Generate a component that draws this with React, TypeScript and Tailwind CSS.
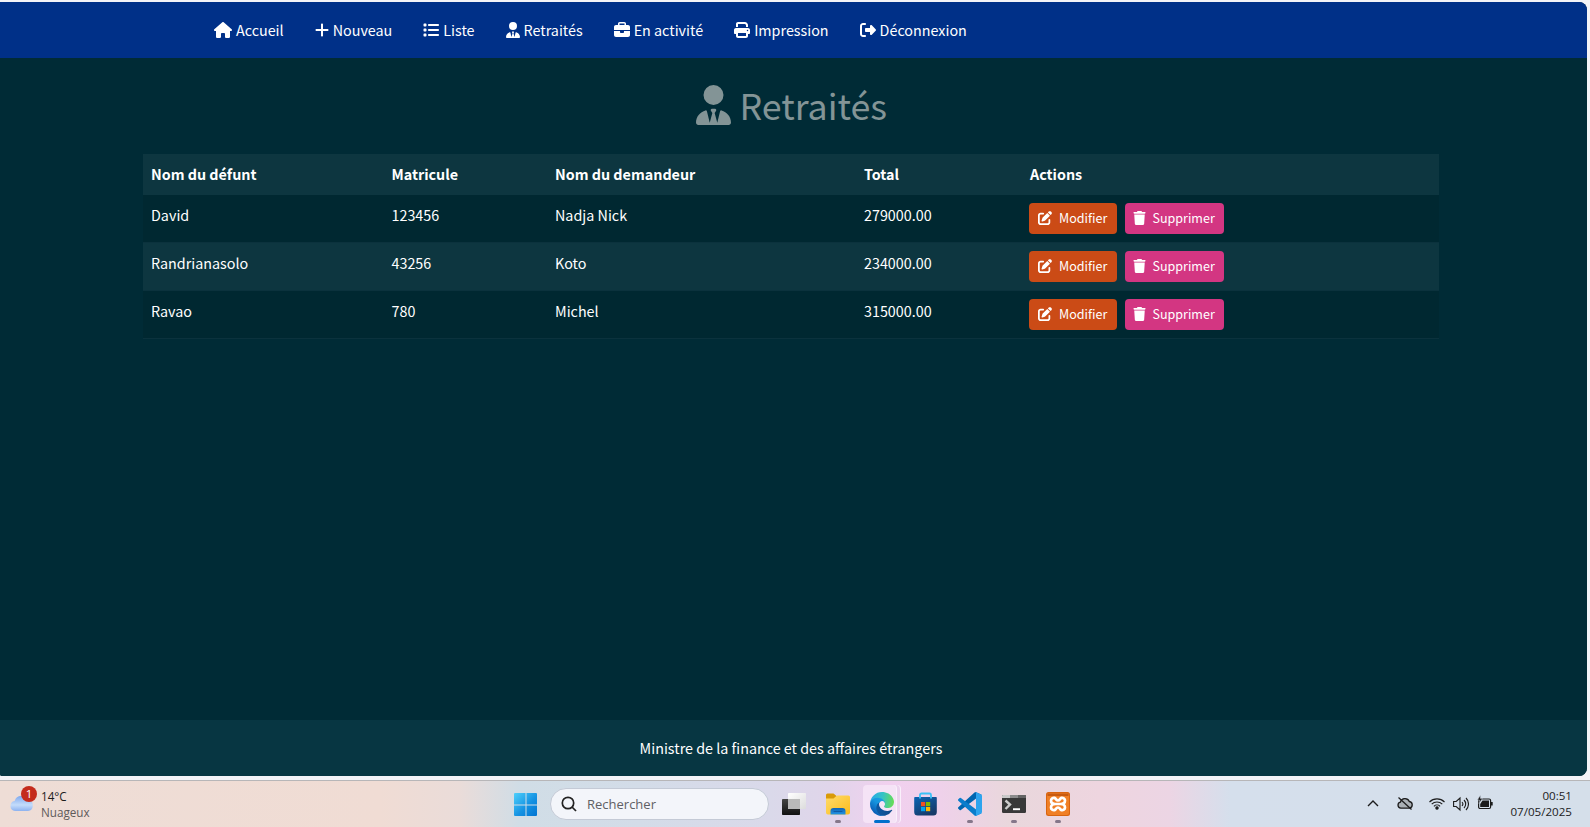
import type { ReactNode } from "react";
import {
  FaHouse,
  FaPlus,
  FaList,
  FaUserTie,
  FaBriefcase,
  FaPrint,
  FaRightFromBracket,
  FaPenToSquare,
  FaTrash,
} from "react-icons/fa6";

const navItems = [
  { label: "Accueil", icon: <FaHouse className="h-4 w-[18px]" /> },
  { label: "Nouveau", icon: <FaPlus className="h-4 w-[14px]" /> },
  { label: "Liste", icon: <FaList className="size-4" /> },
  { label: "Retraités", icon: <FaUserTie className="h-4 w-[14px]" /> },
  { label: "En activité", icon: <FaBriefcase className="size-4" /> },
  { label: "Impression", icon: <FaPrint className="size-4" /> },
  { label: "Déconnexion", icon: <FaRightFromBracket className="size-4" /> },
];

const rows = [
  { defunt: "David", matricule: "123456", demandeur: "Nadja Nick", total: "279000.00" },
  { defunt: "Randrianasolo", matricule: "43256", demandeur: "Koto", total: "234000.00" },
  { defunt: "Ravao", matricule: "780", demandeur: "Michel", total: "315000.00" },
];

function Navbar() {
  return (
    <nav className="flex h-14 shrink-0 items-center gap-[31px] bg-[#003088] pl-[214px] text-white">
      {navItems.map((item) => (
        <a key={item.label} className="flex items-center gap-1 whitespace-nowrap">
          {item.icon}
          <span className="leading-6">{item.label}</span>
        </a>
      ))}
    </nav>
  );
}

function RecordsTable() {
  return (
    <table className="ml-[143px] mt-[21px] w-[1296px] table-fixed border-collapse text-left text-white">
      <colgroup>
        <col className="w-[240.5px]" />
        <col className="w-[163.5px]" />
        <col className="w-[309px]" />
        <col className="w-[165px]" />
        <col />
      </colgroup>
      <thead>
        <tr className="h-[41px] bg-[#0d3640] align-top font-bold">
          {["Nom du défunt", "Matricule", "Nom du demandeur", "Total", "Actions"].map((h) => (
            <th key={h} className="px-2 pt-2 leading-6 last:pl-[9px]">{h}</th>
          ))}
        </tr>
      </thead>
      <tbody>
        {rows.map((r) => (
          <tr
            key={r.matricule}
            className="h-12 bg-[#002831] align-top shadow-[inset_0_-1px_0_#0b323d] even:bg-[#0d3640]"
          >
            <td className="px-2 pt-2 leading-6">{r.defunt}</td>
            <td className="px-2 pt-2 leading-6">{r.matricule}</td>
            <td className="px-2 pt-2 leading-6">{r.demandeur}</td>
            <td className="px-2 pt-2 leading-6">{r.total}</td>
            <td className="px-2 pt-2">
              <div className="flex gap-2 text-[12.53px] leading-[21px]">
                <button className="flex h-[31px] w-[88px] items-center gap-[7px] rounded-[4px] bg-[#cb4b16] pl-[9px]">
                  <FaPenToSquare className="mb-[2px] size-[14px]" />
                  <span className="pb-[2px]">Modifier</span>
                </button>
                <button className="flex h-[31px] w-[99px] items-center gap-[6.5px] rounded-[4px] bg-[#d33682] pl-[8px]">
                  <FaTrash className="mb-[2px] h-[14px] w-[13px]" />
                  <span className="pb-[2px]">Supprimer</span>
                </button>
              </div>
            </td>
          </tr>
        ))}
      </tbody>
    </table>
  );
}

function WeatherIcon() {
  return (
    <svg width="28" height="28" viewBox="0 0 28 28">
      <defs>
        <linearGradient id="cloud" x1="0" y1="0" x2="0" y2="1">
          <stop offset="0" stopColor="#7ea8ee" />
          <stop offset="0.6" stopColor="#c4dcfa" />
          <stop offset="1" stopColor="#8db2f0" />
        </linearGradient>
      </defs>
      <path d="M6 25a5 5 0 0 1-.4-9.9A7.5 7.5 0 0 1 19.500 14a5.600 5.600 0 0 1-.5 11z" fill="url(#cloud)" />
      <circle cx="20" cy="8" r="8" fill="#c42b1c" />
      <text x="20" y="12" textAnchor="middle" fontSize="11.5" fill="#fff" fontFamily="Open Sans, sans-serif">1</text>
    </svg>
  );
}

function WindowsIcon() {
  return (
    <svg width="24" height="24" viewBox="0 0 24 24">
      <defs>
        <linearGradient id="win" gradientUnits="userSpaceOnUse" x1="0" y1="0" x2="24" y2="24">
          <stop offset="0" stopColor="#4fd0fb" />
          <stop offset="0.55" stopColor="#1391e2" />
          <stop offset="1" stopColor="#0072d0" />
        </linearGradient>
      </defs>
      <path fill="url(#win)" d="M1 0h10.500v11.500H0V1a1 1 0 0 1 1-1zM12.500 0H22a1 1 0 0 1 1 1v10.500H12.500zM0 12.500h11.500V23H1a1 1 0 0 1-1-1zM12.500 12.500H23V22a1 1 0 0 1-1 1h-9.500z" />
    </svg>
  );
}

function TaskViewIcon() {
  return (
    <svg width="24" height="24" viewBox="0 0 24 24">
      <defs>
        <linearGradient id="tv" x1="0" y1="0" x2="0" y2="1">
          <stop offset="0" stopColor="#444" />
          <stop offset="1" stopColor="#111" />
        </linearGradient>
        <linearGradient id="tvf" x1="0" y1="0" x2="1" y2="1">
          <stop offset="0" stopColor="#fff" />
          <stop offset="1" stopColor="#dcdcdc" />
        </linearGradient>
      </defs>
      <rect y="7" width="18" height="16" rx=".8" fill="url(#tv)" />
      <rect x="6" y="1" width="18" height="16" rx=".8" fill="url(#tvf)" />
      <path d="M6 7h12v10H6.800a.8.8 0 0 1-.8-.8z" fill="#b9b9b9" />
    </svg>
  );
}

function FolderIcon() {
  return (
    <svg width="24" height="24" viewBox="0 0 24 24">
      <defs>
        <linearGradient id="fold" x1="0" y1="0" x2="1" y2="1">
          <stop offset="0" stopColor="#ffdb6b" />
          <stop offset="1" stopColor="#fbbc1c" />
        </linearGradient>
        <linearGradient id="foldb" x1="0" y1="0" x2="0" y2="1">
          <stop offset="0" stopColor="#1164b4" />
          <stop offset="1" stopColor="#2294e4" />
        </linearGradient>
      </defs>
      <path d="M0 3a1.500 1.500 0 0 1 1.500-1.500h6L10.500 4H22v4H0z" fill="#d99a08" />
      <path d="M0 6.500h7.500L11 3.500h11.500A1.500 1.500 0 0 1 24 5v15.500a2 2 0 0 1-2 2H2a2 2 0 0 1-2-2z" fill="url(#fold)" />
      <path d="M4.500 22.500V19a3 3 0 0 1 3-3h9a3 3 0 0 1 3 3v3.500z" fill="url(#foldb)" />
      <path d="M8 19.500h8" stroke="#0f5ba6" strokeWidth="1" strokeLinecap="round" />
    </svg>
  );
}

function EdgeIcon() {
  return (
    <svg width="24" height="24" viewBox="0 0 256 256">
      <defs>
        <linearGradient id="ea" x1="60" y1="177" x2="240" y2="177" gradientUnits="userSpaceOnUse">
          <stop offset="0" stopColor="#0c59a4" />
          <stop offset="1" stopColor="#114a8b" />
        </linearGradient>
        <linearGradient id="eb" x1="150" y1="90" x2="40" y2="220" gradientUnits="userSpaceOnUse">
          <stop offset="0" stopColor="#1b9de2" />
          <stop offset="0.4" stopColor="#1595df" />
          <stop offset="1" stopColor="#0a5cb5" />
        </linearGradient>
        <linearGradient id="ec" x1="10" y1="60" x2="250" y2="100" gradientUnits="userSpaceOnUse">
          <stop offset="0" stopColor="#28a9e6" />
          <stop offset="0.5" stopColor="#36c3c5" />
          <stop offset="1" stopColor="#66dc57" />
        </linearGradient>
      </defs>
      <path fill="url(#ea)" d="M231 190.500c-3.400 1.800-6.900 3.400-10.500 4.700a101 101 0 0 1-35.900 6.500c-47.300 0-88.500-32.500-88.500-74.300a31.500 31.500 0 0 1 16.400-27.300c-42.800 1.800-53.800 46.400-53.800 72.500 0 73.900 68.100 81.400 82.800 81.400 7.900 0 19.800-2.300 27-4.600l1.300-.4a128 128 0 0 0 66.600-52.800 4 4 0 0 0-5.400-5.700z" />
      <path fill="url(#eb)" d="M105.700 241.400a79 79 0 0 1-22.700-21.300 80.700 80.700 0 0 1 29.500-120c3.100-1.500 8.500-4.100 15.600-4a32.400 32.400 0 0 1 25.700 13 31.900 31.900 0 0 1 6.300 18.700c0-.2 24.500-79.600-80-79.600C36.200 48.200.1 89.900.1 126.400a130 130 0 0 0 12.100 56 128 128 0 0 0 156.400 67.100 75.500 75.500 0 0 1-62.800-8z" />
      <path fill="url(#ec)" d="M152.300 148.900c-.9 1-3.400 2.500-3.400 5.600 0 2.600 1.700 5.200 4.800 7.300 14.300 10 41.400 8.700 41.500 8.700a59.600 59.600 0 0 0 30.300-8.400A61.400 61.400 0 0 0 256 109.300c.3-22.400-8-37.300-11.300-43.900C223.500 23.900 177.700 0 128 0A128 128 0 0 0 0 126.200c.5-36.500 36.800-66 80-66 3.500 0 23.500.3 42 10a72.600 72.600 0 0 1 30.900 29.300c6.100 10.600 7.200 24.100 7.200 29.500s-2.700 13.300-7.800 19.900z" />
    </svg>
  );
}

function StoreIcon() {
  return (
    <svg width="24" height="24" viewBox="0 0 24 24">
      <defs>
        <linearGradient id="bag" x1="0" y1="0" x2="0.6" y2="1">
          <stop offset="0" stopColor="#0c64b4" />
          <stop offset="1" stopColor="#173a68" />
        </linearGradient>
      </defs>
      <path d="M1 5h21a.8.8 0 0 1 .8.800V20a3.500 3.500 0 0 1-3.500 3.500H3.700A3.500 3.500 0 0 1 .2 20V5.800A.8.800 0 0 1 1 5z" fill="url(#bag)" />
      <path d="M6 6.500V3a1.500 1.500 0 0 1 1.500-1.500h8A1.500 1.500 0 0 1 17 3v3.500" fill="none" stroke="#3bc0f5" strokeWidth="1.800" />
      <path fill="#f25022" d="M7 10h4.200v4.200H7z" />
      <path fill="#7fba00" d="M12 10h4.200v4.200H12z" />
      <path fill="#00a4ef" d="M7 15h4.200v4.200H7z" />
      <path fill="#ffb900" d="M12 15h4.200v4.200H12z" />
    </svg>
  );
}

function CodeIcon() {
  return (
    <svg width="24" height="24" viewBox="0 0 100 100">
      <path fill="#0066b0" d="M96.500 10.800 75.900.9a6.200 6.200 0 0 0-7.100 1.200L1.300 63.600a4.200 4.200 0 0 0 0 6.200l5.500 5a4.200 4.200 0 0 0 5.300.2L93.400 13.400A4.100 4.100 0 0 1 100 16.700v-.3a6.300 6.300 0 0 0-3.500-5.600z" />
      <path fill="#0a7dcc" d="m96.500 89.200-20.600 9.900a6.200 6.200 0 0 1-7.100-1.200L1.300 36.400a4.200 4.200 0 0 1 0-6.200l5.500-5a4.200 4.200 0 0 1 5.300-.2l81.300 61.600a4.100 4.100 0 0 0 6.600-3.300v.3a6.300 6.300 0 0 1-3.500 5.600z" />
      <path fill="#2da4ee" d="M75.900 99.100a6.200 6.200 0 0 1-7.100-1.200 3.700 3.700 0 0 0 6.200-2.600V4.700a3.700 3.700 0 0 0-6.200-2.600 6.200 6.200 0 0 1 7.100-1.200l20.600 9.900a6.300 6.300 0 0 1 3.500 5.600v67.200a6.300 6.300 0 0 1-3.500 5.600z" />
    </svg>
  );
}

function TerminalIcon() {
  return (
    <svg width="24" height="24" viewBox="0 0 24 24">
      <rect y="3" width="24" height="18" rx="1.200" fill="#383838" />
      <path d="M1 3h7v3H0V4a1 1 0 0 1 1-1z" fill="#c8c8c8" />
      <path d="M8 3h8v3H8z" fill="#8c8c8c" />
      <path d="M16 3h7a1 1 0 0 1 1 1v2h-8z" fill="#646464" />
      <path d="m3.500 8.500 4.500 4-4.500 4.500" fill="none" stroke="#ccc" strokeWidth="2.400" />
      <path d="M11 17.200h7" stroke="#fff" strokeWidth="1.900" />
    </svg>
  );
}

function XamppIcon() {
  return (
    <svg width="24" height="24" viewBox="0 0 24 24">
      <rect width="24" height="24" rx="2.500" fill="#d9640f" />
      <rect x="1" y="1" width="22" height="22" rx="2" fill="#f07f25" />
      <path d="M1.500 1.500h21V4h-21z" fill="#c85a10" />
      <path
        d="M9.500 12H14.500M9.500 12C6.500 12 5 10.500 5 8.500S7 5.500 8.500 5.900 10 8.500 12 8.500s2-2.200 3.500-2.600S19 6.500 19 8.500 17.500 12 14.500 12c3 0 4.500 1.500 4.500 3.500s-2 3-3.500 2.600S14 15.500 12 15.500s-2 2.200-3.500 2.600S5 17.500 5 15.500 6.500 12 9.500 12z"
        fill="none"
        stroke="#fff"
        strokeWidth="2.700"
        strokeLinejoin="round"
      />
    </svg>
  );
}

function AppButton({ children, state = "idle" }: { children: ReactNode; state?: "idle" | "open" | "active" }) {
  return (
    <div className="flex w-11 justify-center">
      <div
        className={
          state === "active"
            ? "relative mt-[4px] flex h-[38px] w-[38px] justify-center rounded-[4px] border-r border-[#faf0fb] bg-[#f5e3f6] pt-[7px] shadow-[inset_-3px_0_0_#ecd3ee,inset_-4px_0_0_#faf0fb]"
            : "relative mt-[4px] flex h-[38px] w-[38px] justify-center pt-[7px]"
        }
      >
        {children}
        {state === "active" && <i className="absolute bottom-0 left-[11px] h-[3px] w-4 rounded-full bg-[#0070cc]" />}
        {state === "open" && <i className="absolute bottom-0 left-4 h-[3px] w-[6px] rounded-full bg-[#85778a]" />}
      </div>
    </div>
  );
}

function Tray() {
  return (
    <div className="flex pr-[18px] text-[#1c1c1c]">
      <svg className="mt-[14px]" width="16" height="16" viewBox="0 0 16 16" fill="none" stroke="currentColor" strokeWidth="1.400">
        <path d="m3 11 5-5 5 5" />
      </svg>
      <svg className="ml-4 mt-[14px]" width="16" height="16" viewBox="0 0 16 16" fill="none" stroke="currentColor" strokeWidth="1.300">
        <path d="M3.800 13.200a3.100 3.100 0 0 1-.4-6.100A4.700 4.700 0 0 1 12.300 6.500a3.400 3.400 0 0 1 .2 6.700z" fill="#aab0b5" />
        <path d="m1.500 2.500 13 12" />
      </svg>
      <svg className="ml-4 mt-[14px]" width="16" height="16" viewBox="0 0 16 16" fill="none" stroke="currentColor" strokeWidth="1.100">
        <path d="M.5 7a10.600 10.600 0 0 1 15 0M2.700 9.200a7.500 7.500 0 0 1 10.600 0M4.900 11.300a4.400 4.400 0 0 1 6.200 0" />
        <circle cx="8" cy="13" r="1.200" fill="currentColor" />
      </svg>
      <svg className="ml-2 mt-[15px]" width="16" height="16" viewBox="0 0 16 16" fill="none" stroke="currentColor" strokeWidth="1.100">
        <path d="M.6 5.500h2.600L7 2v12l-3.800-3.500H.6zM9 6a3 3 0 0 1 0 4M11 4a5.600 5.600 0 0 1 0 8M13 2a8.500 8.500 0 0 1 0 12" />
      </svg>
      <svg className="ml-2 mt-[14px]" width="16" height="16" viewBox="0 0 16 16">
        <rect x="1.600" y="4" width="12" height="9.500" rx="1.500" fill="none" stroke="currentColor" strokeWidth="1.200" />
        <path d="M5.500 5.500H12V12H3.200V9z" fill="currentColor" />
        <path d="M14 7h1.700v3.500H14z" fill="currentColor" />
        <path d="M3.500 0 .3 5h2L2 8.500 5.500 3.500h-2z" fill="currentColor" stroke="#d5dfec" strokeWidth=".5" />
      </svg>
      <div className="mt-[7px] w-[79px] text-right text-[11.6px] leading-4">
        <div>00:51</div>
        <div>07/05/2025</div>
      </div>
    </div>
  );
}

function Taskbar() {
  return (
    <div className="flex h-[47px] shrink-0 border-t border-[#b7b6b8] bg-[linear-gradient(90deg,#eeddd6_0px,#f0dcd4_380px,#eadcd9_460px,#d0dde6_520px,#d3dce8_640px,#dad9ea_770px,#e0d5ea_830px,#f1d0ef_890px,#efd1ea_940px,#e9d7dc_1010px,#eed5df_1100px,#ecd5e4_1170px,#d5dfec_1230px,#d5dfea_1590px)] font-['Open_Sans',sans-serif]">
      <div className="flex w-[514px] pl-[9px]">
        <div className="mt-[5px]">
          <WeatherIcon />
        </div>
        <div className="ml-1 mt-[7px] text-[11.7px] leading-4">
          <div className="text-[#1c1c1c]">14°C</div>
          <div className="text-[#5e5a5a]">Nuageux</div>
        </div>
      </div>
      <div className="mt-3">
        <WindowsIcon />
      </div>
      <div className="ml-[12px] mt-[7px] flex h-[32px] w-[219px] items-center rounded-full border border-[#c4cad6] bg-[#f3f5fa] pl-[10px]">
        <svg width="16" height="16" viewBox="0 0 16 16" fill="none" stroke="#222" strokeWidth="1.700">
          <circle cx="7" cy="7" r="5.700" />
          <path d="m11 11 4 4" />
        </svg>
        <span className="ml-[10px] pt-px text-[13px] text-[#5f6064]">Rechercher</span>
      </div>
      <div className="ml-[3px] flex">
        <AppButton><TaskViewIcon /></AppButton>
        <AppButton state="open"><FolderIcon /></AppButton>
        <AppButton state="active"><EdgeIcon /></AppButton>
        <AppButton><StoreIcon /></AppButton>
        <AppButton state="open"><CodeIcon /></AppButton>
        <AppButton state="open"><TerminalIcon /></AppButton>
        <AppButton state="open"><XamppIcon /></AppButton>
      </div>
      <div className="ml-auto">
        <Tray />
      </div>
    </div>
  );
}

export default function App() {
  return (
    <div className="flex h-[827px] w-[1590px] flex-col overflow-hidden bg-[#f3f3f7] pt-[2px] font-['Noto_Sans_CJK_JP',sans-serif] text-[14.33px]">
      <div className="mb-1 flex h-[774px] w-[1587px] flex-col overflow-hidden rounded-r-[8px] rounded-bl-[2px] bg-[#002b36]">
        <Navbar />
        <main className="grow">
          <h1 className="flex h-[75px] items-start justify-center pt-[27px] pr-[4px] text-[35.8px] leading-[40px] text-[#839496]">
            <FaUserTie className="h-10 w-[35px]" />
            <span className="ml-[8.5px] -mt-px">Retraités</span>
          </h1>
          <RecordsTable />
        </main>
        <footer className="flex h-14 items-center justify-center bg-[#073642] pr-[5px] text-white">
          Ministre de la finance et des affaires étrangers
        </footer>
      </div>
      <Taskbar />
    </div>
  );
}
